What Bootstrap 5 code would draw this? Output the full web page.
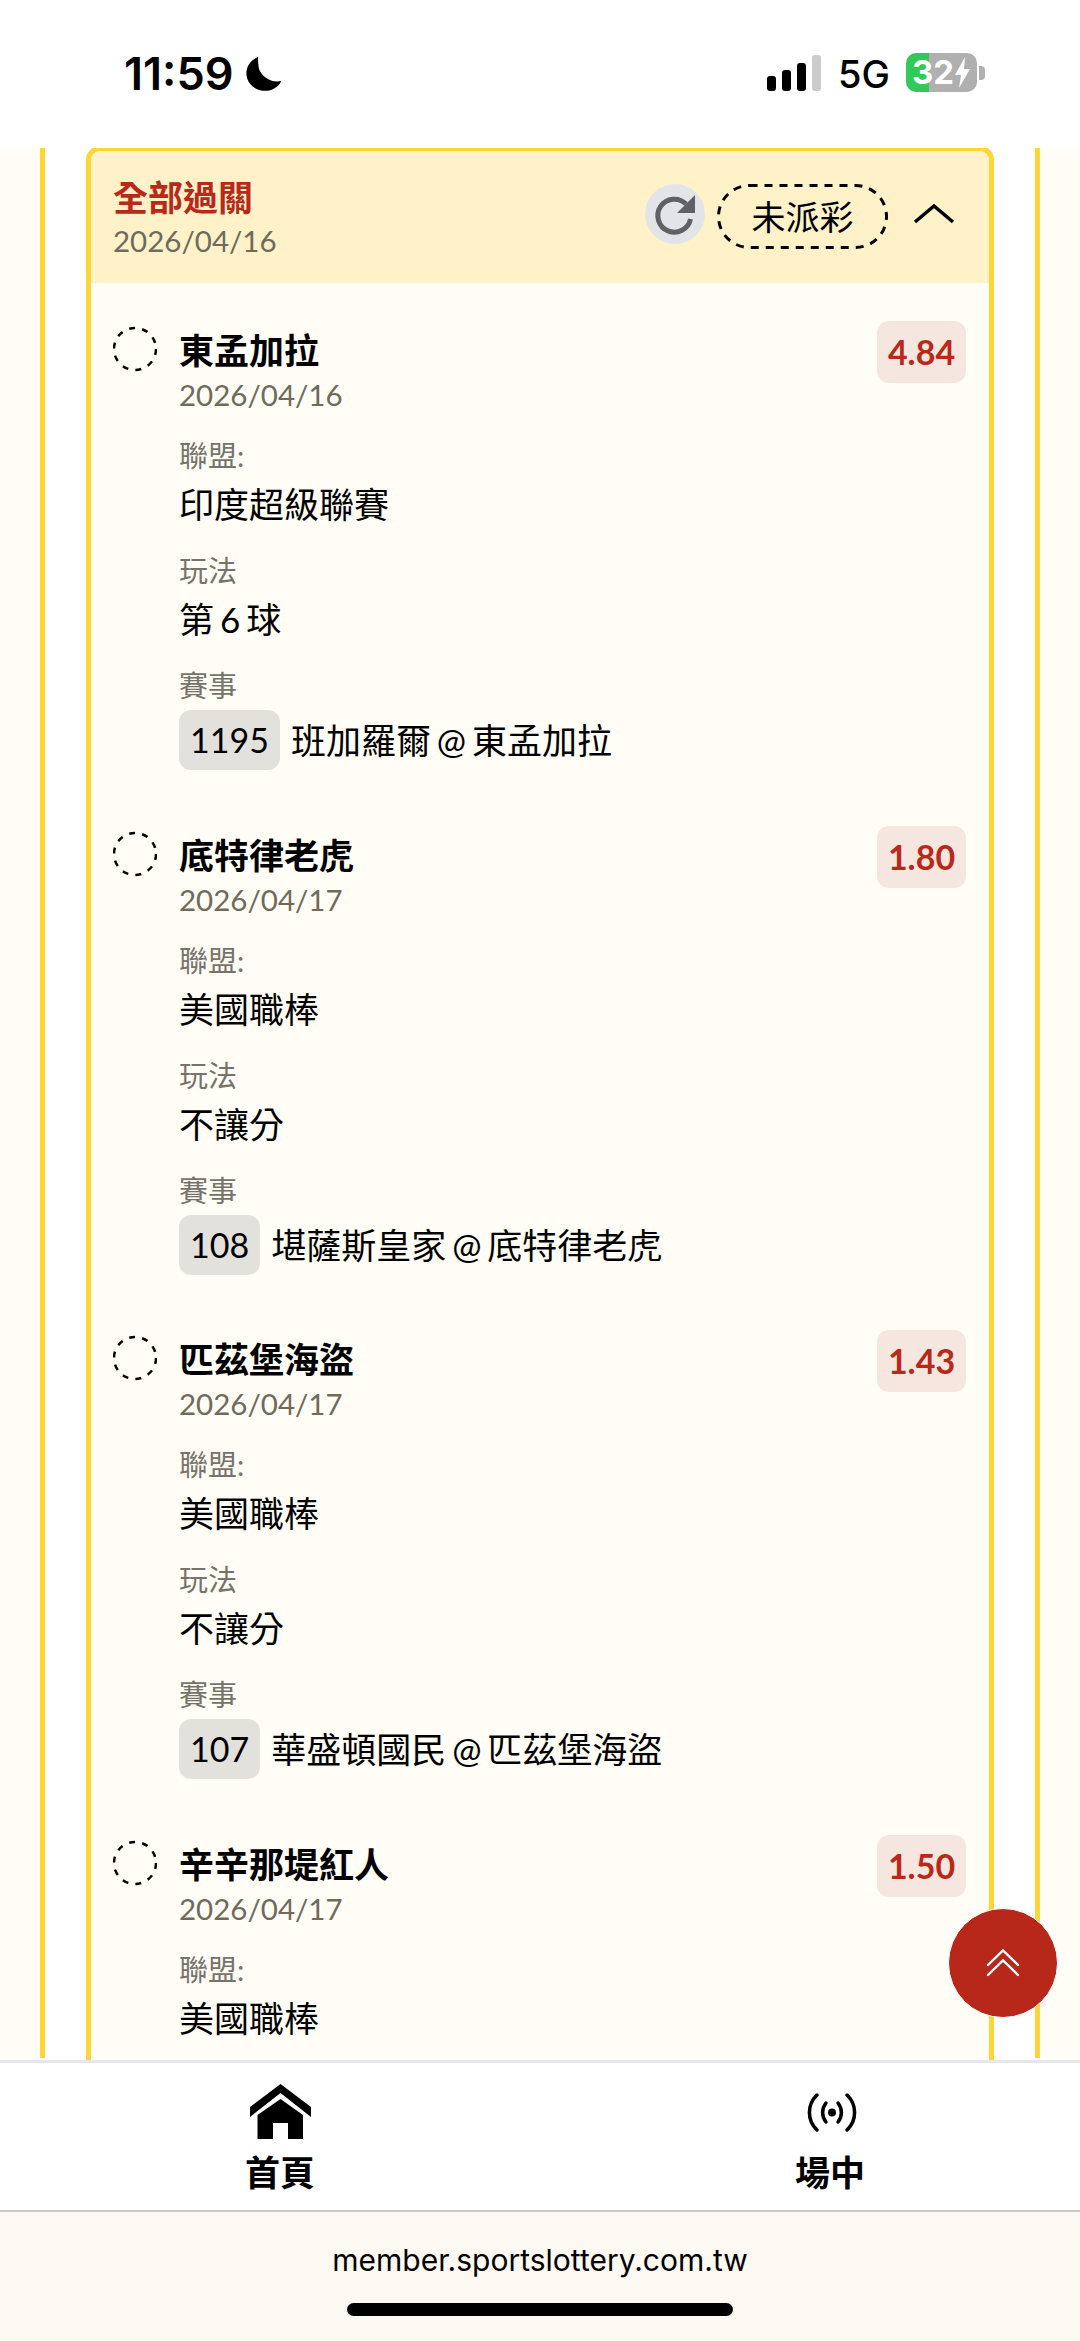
<!DOCTYPE html>
<html lang="zh-Hant">
<head>
    <meta charset="UTF-8">
    <meta name="viewport" content="width=device-width, initial-scale=1.0">
    <title>全部過關</title>
    <link href="https://cdn.jsdelivr.net/npm/bootstrap@5.3.0/dist/css/bootstrap.min.css" rel="stylesheet">
    <style>
        body { margin: 0; background: #fff; font-family: Lato, "Noto Sans CJK TC", sans-serif; color: #000; }
        .screen { width: 1080px; height: 2341px; overflow: hidden; position: relative; }

        /* status bar */
        .status-bar { height: 148px; flex: none; padding: 51px 95px 0 124px; font-family: Inter, sans-serif; }
        .status-time { font-size: 45px; font-weight: 600; line-height: 46px; }
        .status-moon { margin: 5px 0 0 11px; }
        .signal-wrap { height: 36px; margin-top: 4px; gap: 6px; }
        .signal-bar { width: 9px; background: #000; border-radius: 3px; }
        .status-5g { font-size: 38px; font-weight: 500; line-height: 40px; margin: 3px 16px 0 17px; }
        .battery-wrap { margin-top: 2px; }
        .battery { width: 71px; height: 39px; border-radius: 10px; background: linear-gradient(90deg, #34c759 23px, #b0b0b0 23px); color: #fff; font-size: 33px; font-weight: 700; line-height: 39px; }
        .battery-bolt { margin-top: 3px; }
        .battery-tip { width: 6px; height: 14px; background: #b0b0b0; border-radius: 0 4px 4px 0; margin-left: 2px; }

        /* page */
        .page-area { flex: 1 1 auto; min-height: 0; overflow: hidden; background: #fffdf5; padding: 0 40px; }
        .outer-col { height: 100%; background: #fff; border-left: 5px solid #ffd633; border-right: 5px solid #ffd633; padding: 0 41px; }
        .slip-card { margin-top: -2px; background: #fffdf5; border: 5px solid #ffd633; border-radius: 14px; --bs-card-border-width: 0; overflow: hidden; }
        .slip-head { height: 132px; background: #fff2c8; padding: 24px 34px 0 22px; border: 0; border-radius: 0; }
        .slip-title { font-size: 35px; font-weight: 700; line-height: 44px; color: #b8291a; }
        .slip-date { font-size: 29.5px; line-height: 40px; color: #6f6a5c; margin-top: 2px; }
        .head-tools { margin-top: 9px; }
        .status-pill { width: 171px; height: 65px; margin-left: 12px; font-size: 34px; line-height: 1; position: relative; }
        .pill-line { position: absolute; left: 0; top: 0; }
        .refresh-btn { width: 60px; height: 60px; flex: none; }
        .chev-up { width: 42px; height: 20px; margin: 20px 0 0 25px; flex: none; }

        .slip-body { padding: 38px 23px 0 22px; }
        .bet-row { margin-bottom: 55.5px; }
        .bet-mark { width: 44px; height: 46px; flex: none; margin: 5px 22px 0 0; }
        .bet-name { font-size: 35px; font-weight: 700; line-height: 44px; margin-top: 7px; }
        .bet-date { font-size: 29.5px; line-height: 40px; color: #6f6a5c; margin: 3px 0 21px; }
        .bet-label { font-size: 29px; line-height: 40px; color: #77736a; margin-bottom: 6px; }
        .bet-value { font-size: 35px; line-height: 44px; margin-bottom: 25px; word-spacing: -3px; }
        .bet-label-last { margin-bottom: 4px; }
        .game-no { background: #e3e1dc; border-radius: 12px; height: 60px; padding: 0 11px; font-size: 34px; line-height: 60px; margin-right: 11px; }
        .game-text { font-size: 35px; line-height: 60px; word-spacing: -3px; }
        .odds-tag { width: 89px; height: 62px; background: #f6e6e0; border-radius: 12px; color: #b8291a; font-size: 34px; font-weight: 700; line-height: 62px; text-align: center; flex: none; }

        /* float button */
        .to-top { position: absolute; left: 948px; top: 1908px; width: 110px; height: 110px; border-radius: 50%; background: #b8281a; border: 1px solid #fff; padding: 0; }

        /* bottom nav */
        .tab-bar { height: 152px; flex: none; background: #fff; border-top: 3px solid #e5e7eb; border-bottom: 2px solid #c8c8c8; }
        .tab-item { width: 50%; padding-top: 21px; }
        .tab-home { padding-left: 20px; }
        .tab-live { padding-left: 40px; }
        .tab-icon { height: 56px; }
        .tab-icon-live { margin-left: 4px; }
        .tab-label { font-size: 35px; font-weight: 700; line-height: 44px; margin-top: 10px; }

        /* browser bar */
        .url-bar { height: 129px; flex: none; background: #fcf9f2; }
        .url-text { font-family: Inter, sans-serif; font-size: 30px; line-height: 40px; margin-top: 28px; }
        .home-bar { width: 386px; height: 13px; background: #000; border-radius: 7px; margin-top: 23px; }
    </style>
</head>
<body>
<div class="screen d-flex flex-column">

    <div class="status-bar d-flex justify-content-between align-items-start">
        <div class="d-flex align-items-start">
            <span class="status-time">11:59</span>
            <svg class="status-moon" width="37" height="36" viewBox="0 0 37 36"><path d="M13 1 C3 5 0 14 2 22 C5 32 16 37 26 34 C31 32 35 29 36 25 C26 27 17 21 14 13 C13 8 13 4 13 1Z" fill="#000"/></svg>
        </div>
        <div class="d-flex align-items-start">
            <div class="signal-wrap d-flex align-items-end">
                <div class="signal-bar" style="height:15px"></div>
                <div class="signal-bar" style="height:21px"></div>
                <div class="signal-bar" style="height:28px"></div>
                <div class="signal-bar" style="height:36px;background:#ccc"></div>
            </div>
            <span class="status-5g">5G</span>
            <div class="battery-wrap d-flex align-items-center">
                <div class="battery d-flex justify-content-center">32<svg class="battery-bolt" width="17" height="33" viewBox="0 0 17 33"><path d="M11 1 L1 19 H7 L5 32 L16 13 H10Z" fill="#fff"/></svg></div>
                <div class="battery-tip"></div>
            </div>
        </div>
    </div>

    <div class="page-area">
        <div class="outer-col">
            <div class="card slip-card">
                <div class="card-header slip-head d-flex justify-content-between align-items-start">
                    <div>
                        <div class="slip-title">全部過關</div>
                        <div class="slip-date">2026/04/16</div>
                    </div>
                    <div class="head-tools d-flex align-items-start">
                        <svg class="refresh-btn" viewBox="0 0 60 60">
                            <circle cx="30" cy="30" r="30" fill="#e3e4e8"/>
                            <path d="M41 20 A16.5 16.5 0 1 0 45.5 35" fill="none" stroke="#5f6165" stroke-width="5"/>
                            <path d="M50 11 V29 H32Z" fill="#5f6165"/>
                        </svg>
                        <div class="status-pill d-flex align-items-center justify-content-center">
                            <svg class="pill-line" width="171" height="65" viewBox="0 0 171 65"><rect x="1.5" y="1.5" width="168" height="62" rx="31" fill="none" stroke="#000" stroke-width="3" stroke-dasharray="8 7"/></svg>
                            未派彩
                        </div>
                        <svg class="chev-up" viewBox="0 0 42 20"><path d="M2 18 L21 2 L40 18" fill="none" stroke="#000" stroke-width="3.5"/></svg>
                    </div>
                </div>
                <div class="card-body slip-body">

                    <div class="bet-row d-flex">
                        <svg class="bet-mark" viewBox="0 0 44 46"><circle cx="22" cy="23" r="21" fill="none" stroke="#000" stroke-width="2.5" stroke-dasharray="6 7.2"/></svg>
                        <div class="flex-grow-1">
                            <div class="bet-name">東孟加拉</div>
                            <div class="bet-date">2026/04/16</div>
                            <div class="bet-label">聯盟:</div>
                            <div class="bet-value">印度超級聯賽</div>
                            <div class="bet-label">玩法</div>
                            <div class="bet-value">第 6 球</div>
                            <div class="bet-label bet-label-last">賽事</div>
                            <div class="d-flex"><span class="game-no">1195</span><span class="game-text">班加羅爾 @ 東孟加拉</span></div>
                        </div>
                        <div class="odds-tag">4.84</div>
                    </div>

                    <div class="bet-row d-flex">
                        <svg class="bet-mark" viewBox="0 0 44 46"><circle cx="22" cy="23" r="21" fill="none" stroke="#000" stroke-width="2.5" stroke-dasharray="6 7.2"/></svg>
                        <div class="flex-grow-1">
                            <div class="bet-name">底特律老虎</div>
                            <div class="bet-date">2026/04/17</div>
                            <div class="bet-label">聯盟:</div>
                            <div class="bet-value">美國職棒</div>
                            <div class="bet-label">玩法</div>
                            <div class="bet-value">不讓分</div>
                            <div class="bet-label bet-label-last">賽事</div>
                            <div class="d-flex"><span class="game-no">108</span><span class="game-text">堪薩斯皇家 @ 底特律老虎</span></div>
                        </div>
                        <div class="odds-tag">1.80</div>
                    </div>

                    <div class="bet-row d-flex">
                        <svg class="bet-mark" viewBox="0 0 44 46"><circle cx="22" cy="23" r="21" fill="none" stroke="#000" stroke-width="2.5" stroke-dasharray="6 7.2"/></svg>
                        <div class="flex-grow-1">
                            <div class="bet-name">匹茲堡海盜</div>
                            <div class="bet-date">2026/04/17</div>
                            <div class="bet-label">聯盟:</div>
                            <div class="bet-value">美國職棒</div>
                            <div class="bet-label">玩法</div>
                            <div class="bet-value">不讓分</div>
                            <div class="bet-label bet-label-last">賽事</div>
                            <div class="d-flex"><span class="game-no">107</span><span class="game-text">華盛頓國民 @ 匹茲堡海盜</span></div>
                        </div>
                        <div class="odds-tag">1.43</div>
                    </div>

                    <div class="bet-row d-flex">
                        <svg class="bet-mark" viewBox="0 0 44 46"><circle cx="22" cy="23" r="21" fill="none" stroke="#000" stroke-width="2.5" stroke-dasharray="6 7.2"/></svg>
                        <div class="flex-grow-1">
                            <div class="bet-name">辛辛那堤紅人</div>
                            <div class="bet-date">2026/04/17</div>
                            <div class="bet-label">聯盟:</div>
                            <div class="bet-value">美國職棒</div>
                        </div>
                        <div class="odds-tag">1.50</div>
                    </div>

                </div>
            </div>
        </div>
    </div>

    <div class="tab-bar d-flex">
        <div class="tab-item tab-home d-flex flex-column align-items-center">
            <svg class="tab-icon" width="62" viewBox="0 0 62 56">
                <path d="M31.5 0 L62 23 V33 L31.5 9 L1 33 V23Z" fill="#000"/>
                <path d="M31.5 15 L54 31 V55 H39 V39 H24 V55 H8.5 V31Z" fill="#000"/>
            </svg>
            <div class="tab-label">首頁</div>
        </div>
        <div class="tab-item tab-live d-flex flex-column align-items-center">
            <svg class="tab-icon tab-icon-live" width="52" viewBox="0 0 52 56">
                <circle cx="26" cy="28.5" r="4" fill="#000"/>
                <g fill="none" stroke="#000" stroke-width="3.5" stroke-linecap="round">
                    <path d="M20 19 A15 15 0 0 0 20 38"/>
                    <path d="M32 19 A15 15 0 0 1 32 38"/>
                    <path d="M11 11 A24 24 0 0 0 11 46"/>
                    <path d="M41 11 A24 24 0 0 1 41 46"/>
                </g>
            </svg>
            <div class="tab-label">場中</div>
        </div>
    </div>

    <div class="url-bar d-flex flex-column align-items-center">
        <div class="url-text">member.sportslottery.com.tw</div>
        <div class="home-bar"></div>
    </div>

    <button type="button" class="to-top d-flex align-items-center justify-content-center">
        <svg width="34" height="28" viewBox="0 0 34 28"><g fill="none" stroke="#fff" stroke-width="2.4" stroke-linecap="round"><path d="M2 16 L17 1.5 L32 16"/><path d="M2 26 L17 11.5 L32 26"/></g></svg>
    </button>

</div>
<script src="https://cdn.jsdelivr.net/npm/bootstrap@5.3.0/dist/js/bootstrap.bundle.min.js"></script>
</body>
</html>
